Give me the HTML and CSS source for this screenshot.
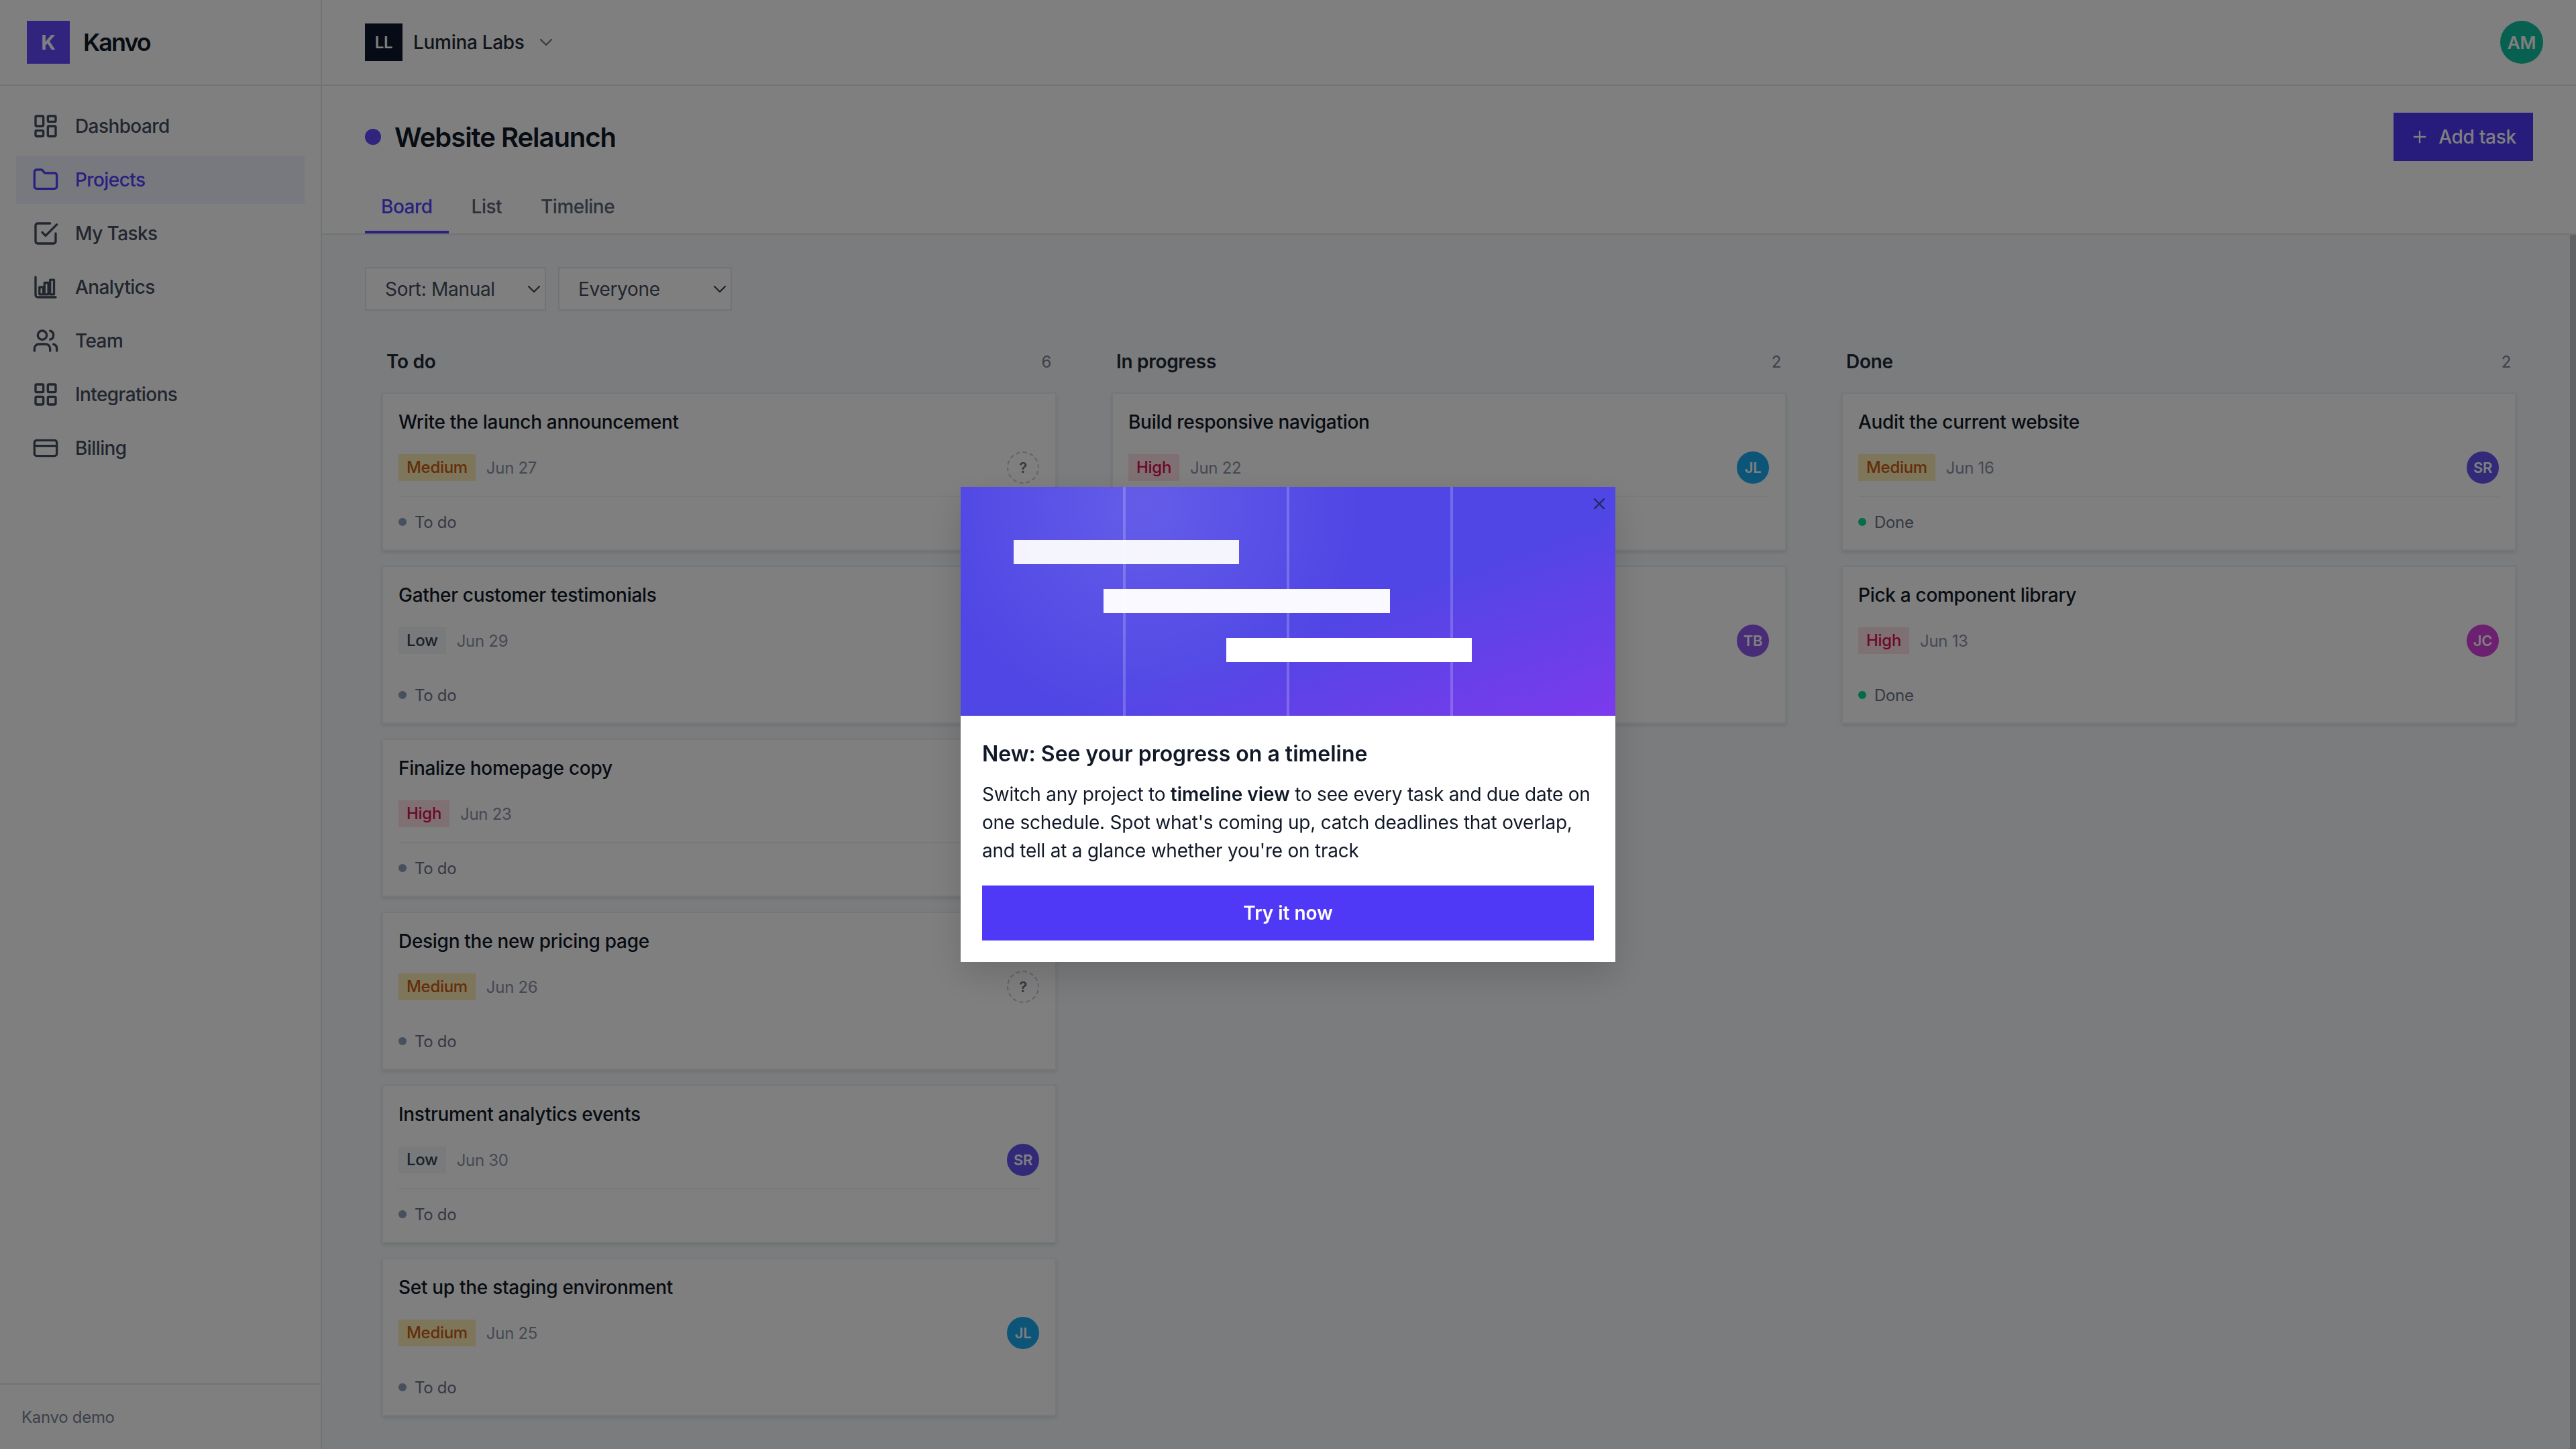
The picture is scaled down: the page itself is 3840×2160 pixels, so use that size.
FILE: index.html
```html
<!DOCTYPE html>
<html lang="en">
  <head>
    <meta charset="UTF-8" />
    <title>Kanvo - Website Relaunch</title>
    <link rel="stylesheet" href="styles.css">
  </head>
  <body>
    <div class="app">
      <aside class="sidebar">
        <div class="brand">
          <span class="brand-mark">K</span>
          <span class="brand-name">Kanvo</span>
        </div>
        <nav class="nav">
          <a class="nav-item">
            <svg class="icon" viewBox="0 0 24 24"><rect x="3" y="3" width="7" height="9" rx="1"/><rect x="14" y="3" width="7" height="5" rx="1"/><rect x="14" y="12" width="7" height="9" rx="1"/><rect x="3" y="16" width="7" height="5" rx="1"/></svg>
            Dashboard
          </a>
          <a class="nav-item active">
            <svg class="icon" viewBox="0 0 24 24"><path d="M20 20a2 2 0 0 0 2-2V8a2 2 0 0 0-2-2h-7.9a2 2 0 0 1-1.69-.9L9.6 3.9A2 2 0 0 0 7.93 3H4a2 2 0 0 0-2 2v13a2 2 0 0 0 2 2Z"/></svg>
            Projects
          </a>
          <a class="nav-item">
            <svg class="icon" viewBox="0 0 24 24"><path d="M9 11l3 3L22 4"/><path d="M21 12v7a2 2 0 0 1-2 2H5a2 2 0 0 1-2-2V5a2 2 0 0 1 2-2h11"/></svg>
            My Tasks
          </a>
          <a class="nav-item">
            <svg class="icon" viewBox="0 0 24 24"><path d="M3 3v16a2 2 0 0 0 2 2h16"/><rect x="6.5" y="12" width="3.5" height="6.5"/><rect x="11" y="8" width="3.5" height="10.5"/><rect x="16" y="5.5" width="3.5" height="13"/></svg>
            Analytics
          </a>
          <a class="nav-item">
            <svg class="icon" viewBox="0 0 24 24"><path d="M16 21v-2a4 4 0 0 0-4-4H6a4 4 0 0 0-4 4v2"/><circle cx="9" cy="7" r="4"/><path d="M22 21v-2a4 4 0 0 0-3-3.87"/><path d="M16 3.13a4 4 0 0 1 0 7.75"/></svg>
            Team
          </a>
          <a class="nav-item">
            <svg class="icon" viewBox="0 0 24 24"><rect x="3" y="3" width="7" height="7" rx="1"/><rect x="14" y="3" width="7" height="7" rx="1"/><rect x="14" y="14" width="7" height="7" rx="1"/><rect x="3" y="14" width="7" height="7" rx="1"/></svg>
            Integrations
          </a>
          <a class="nav-item">
            <svg class="icon" viewBox="0 0 24 24"><rect x="2" y="5" width="20" height="14" rx="2"/><path d="M2 10h20"/></svg>
            Billing
          </a>
        </nav>
        <div class="sidebar-foot">Kanvo demo</div>
      </aside>

      <main class="main">
        <header class="topbar">
          <div class="workspace">
            <span class="workspace-mark">LL</span>
            <span class="workspace-name">Lumina Labs</span>
            <svg class="chevron" viewBox="0 0 24 24"><path d="m6 9 6 6 6-6"/></svg>
          </div>
          <span class="avatar avatar-lg teal">AM</span>
        </header>

        <section class="page-head">
          <div class="title-row">
            <div class="title-wrap">
              <span class="title-dot"></span>
              <h1 class="title">Website Relaunch</h1>
            </div>
            <button class="add-btn">
              <svg class="add-icon" viewBox="0 0 24 24"><path d="M5 12h14"/><path d="M12 5v14"/></svg>
              Add task
            </button>
          </div>
          <div class="tabs">
            <a class="tab active">Board</a>
            <a class="tab">List</a>
            <a class="tab">Timeline</a>
          </div>
        </section>

        <section class="board">
          <div class="filters">
            <div class="select select-sort">Sort: Manual <svg class="select-arrow" viewBox="0 0 24 24"><path d="m6 9 6 6 6-6"/></svg></div>
            <div class="select select-people">Everyone <svg class="select-arrow" viewBox="0 0 24 24"><path d="m6 9 6 6 6-6"/></svg></div>
          </div>

          <div class="columns">
            <div class="column">
              <div class="column-head"><span class="column-name">To do</span><span class="column-count">6</span></div>
              <div class="card">
                <div class="card-title">Write the launch announcement</div>
                <div class="card-meta"><span class="pill medium">Medium</span><span class="date">Jun 27</span><span class="avatar none">?</span></div>
                <div class="card-status"><span class="dot"></span>To do</div>
              </div>
              <div class="card">
                <div class="card-title">Gather customer testimonials</div>
                <div class="card-meta"><span class="pill low">Low</span><span class="date">Jun 29</span><span class="avatar teal">AM</span></div>
                <div class="card-status"><span class="dot"></span>To do</div>
              </div>
              <div class="card">
                <div class="card-title">Finalize homepage copy</div>
                <div class="card-meta"><span class="pill high">High</span><span class="date">Jun 23</span><span class="avatar indigo">SR</span></div>
                <div class="card-status"><span class="dot"></span>To do</div>
              </div>
              <div class="card">
                <div class="card-title">Design the new pricing page</div>
                <div class="card-meta"><span class="pill medium">Medium</span><span class="date">Jun 26</span><span class="avatar none">?</span></div>
                <div class="card-status"><span class="dot"></span>To do</div>
              </div>
              <div class="card">
                <div class="card-title">Instrument analytics events</div>
                <div class="card-meta"><span class="pill low">Low</span><span class="date">Jun 30</span><span class="avatar indigo">SR</span></div>
                <div class="card-status"><span class="dot"></span>To do</div>
              </div>
              <div class="card">
                <div class="card-title">Set up the staging environment</div>
                <div class="card-meta"><span class="pill medium">Medium</span><span class="date">Jun 25</span><span class="avatar blue">JL</span></div>
                <div class="card-status"><span class="dot"></span>To do</div>
              </div>
            </div>

            <div class="column">
              <div class="column-head"><span class="column-name">In progress</span><span class="column-count">2</span></div>
              <div class="card">
                <div class="card-title">Build responsive navigation</div>
                <div class="card-meta"><span class="pill high">High</span><span class="date">Jun 22</span><span class="avatar blue">JL</span></div>
                <div class="card-status"><span class="dot progress"></span>In progress</div>
              </div>
              <div class="card">
                <div class="card-title">Refresh the brand palette</div>
                <div class="card-meta"><span class="pill medium">Medium</span><span class="date">Jun 24</span><span class="avatar violet">TB</span></div>
                <div class="card-status"><span class="dot progress"></span>In progress</div>
              </div>
            </div>

            <div class="column">
              <div class="column-head"><span class="column-name">Done</span><span class="column-count">2</span></div>
              <div class="card">
                <div class="card-title">Audit the current website</div>
                <div class="card-meta"><span class="pill medium">Medium</span><span class="date">Jun 16</span><span class="avatar indigo">SR</span></div>
                <div class="card-status"><span class="dot done"></span>Done</div>
              </div>
              <div class="card">
                <div class="card-title">Pick a component library</div>
                <div class="card-meta"><span class="pill high">High</span><span class="date">Jun 13</span><span class="avatar magenta">JC</span></div>
                <div class="card-status"><span class="dot done"></span>Done</div>
              </div>
            </div>
          </div>
          <div class="scrollbar"></div>
        </section>
      </main>
    </div>

    <div class="overlay">
      <div class="modal">
        <div class="hero">
          <span class="hero-bar bar-one"></span>
          <span class="hero-bar bar-two"></span>
          <span class="hero-bar bar-three"></span>
          <svg class="modal-close" viewBox="0 0 24 24"><path d="M18 6 6 18"/><path d="m6 6 12 12"/></svg>
        </div>
        <div class="modal-body">
          <h2 class="modal-title">New: See your progress on a timeline</h2>
          <p class="modal-text">Switch any project to <strong>timeline view</strong> to see every task and due date on one schedule. Spot what's coming up, catch deadlines that overlap, and tell at a glance whether you're on track</p>
          <button class="modal-btn">Try it now</button>
        </div>
      </div>
    </div>
  </body>
</html>
```
FILE: styles.css
```css
* {
  box-sizing: border-box;
}

html,
body {
  margin: 0;
  height: 100%;
  overflow: hidden;
}

body {
  font-family: Inter, "Liberation Sans", sans-serif;
  font-size: 28px;
  letter-spacing: -0.3px;
  color: #111827;
  background-color: #fff;
}

.app {
  display: flex;
  height: 100vh;
}

/* Sidebar */
.sidebar {
  display: flex;
  flex-direction: column;
  flex: 0 0 480px;
  border-right: 2px solid #e5e7eb;
  background-color: #fff;
}

.brand {
  display: flex;
  align-items: center;
  gap: 20px;
  flex: 0 0 128px;
  padding-left: 40px;
  border-bottom: 2px solid #e5e7eb;
}

.brand-mark {
  display: flex;
  justify-content: center;
  align-items: center;
  width: 64px;
  height: 64px;
  background-color: #6048ff;
  color: #fff;
  font-size: 30px;
  font-weight: 700;
}

.brand-name {
  font-size: 36px;
  font-weight: 600;
  letter-spacing: -2px;
}

.nav {
  display: flex;
  flex-direction: column;
  gap: 8px;
  flex: 1;
  padding: 24px;
}

.nav-item {
  display: flex;
  align-items: center;
  gap: 24px;
  height: 72px;
  padding-left: 24px;
  color: #444c5e;
  font-weight: 500;
  letter-spacing: -0.6px;
}

.nav-item.active {
  background-color: #eef2ff;
  color: #5540ff;
}

.icon {
  flex: none;
  width: 40px;
  height: 40px;
  fill: none;
  stroke: currentColor;
  stroke-width: 2;
  stroke-linecap: round;
  stroke-linejoin: round;
}

.sidebar-foot {
  display: flex;
  align-items: center;
  height: 98px;
  padding-left: 32px;
  border-top: 2px solid #e5e7eb;
  color: #7a8296;
  font-size: 24px;
}

/* Main */
.main {
  display: flex;
  flex-direction: column;
  flex: 1;
  min-width: 0;
}

.topbar {
  display: flex;
  justify-content: space-between;
  align-items: center;
  flex: 0 0 128px;
  padding: 0 49px 0 64px;
  border-bottom: 2px solid #e5e7eb;
}

.workspace {
  display: flex;
  align-items: center;
}

.workspace-mark {
  display: flex;
  justify-content: center;
  align-items: center;
  width: 56px;
  height: 56px;
  margin-right: 16px;
  background-color: #0f172a;
  color: #fff;
  font-size: 24px;
  font-weight: 600;
}

.workspace-name {
  font-weight: 500;
  color: #1f2937;
}

.chevron {
  width: 32px;
  height: 32px;
  margin-left: 16px;
  fill: none;
  stroke: #6b7280;
  stroke-width: 1.6;
  stroke-linecap: round;
  stroke-linejoin: round;
}

.page-head {
  flex: 0 0 222px;
  padding: 40px 64px 0;
  border-bottom: 2px solid #e5e7eb;
}

.title-row {
  display: flex;
  justify-content: space-between;
  align-items: center;
  height: 72px;
}

.title-wrap {
  display: flex;
  align-items: center;
  gap: 20px;
}

.title-dot {
  width: 24px;
  height: 24px;
  border-radius: 50%;
  background-color: #6048ff;
}

.title {
  margin: 0;
  font-size: 40px;
  font-weight: 600;
  letter-spacing: -1.05px;
}

.add-btn {
  display: flex;
  justify-content: center;
  align-items: center;
  gap: 14px;
  width: 208px;
  height: 72px;
  border: 0;
  background-color: #4f39f6;
  color: #fff;
  font-family: inherit;
  font-size: 28px;
  font-weight: 500;
  letter-spacing: -0.3px;
}

.add-icon {
  width: 28px;
  height: 28px;
  fill: none;
  stroke: currentColor;
  stroke-width: 2;
  stroke-linecap: round;
}

.tabs {
  display: flex;
  gap: 10px;
  margin-top: 28px;
}

.tab {
  display: flex;
  align-items: center;
  height: 80px;
  padding: 3px 24px 0;
  border-bottom: 4px solid transparent;
  color: #5a6274;
  font-weight: 500;
  letter-spacing: -0.5px;
}

.tab.active {
  border-bottom-color: #5540ff;
  color: #5540ff;
}

/* Board */
.board {
  position: relative;
  flex: 1;
  min-height: 0;
  padding: 48px 64px 0;
  overflow: hidden;
  background-color: #f6f9fc;
}

.scrollbar {
  position: absolute;
  top: 0;
  right: 0;
  bottom: 0;
  width: 9px;
  background-color: #c4c6c9;
}

.filters {
  display: flex;
  gap: 18px;
}

.select {
  display: flex;
  justify-content: space-between;
  align-items: center;
  height: 65px;
  padding: 0 0 0 28px;
  border: 2px solid #e5e7eb;
  background-color: #fff;
  color: #444c5e;
}

.select-sort {
  width: 270px;
}

.select-people {
  width: 259px;
}

.select-arrow {
  width: 32px;
  height: 32px;
  fill: none;
  stroke: #374151;
  stroke-width: 1.6;
  stroke-linecap: round;
  stroke-linejoin: round;
}

.columns {
  display: flex;
  gap: 32px;
  margin-top: 48px;
}

.column {
  display: flex;
  flex-direction: column;
  gap: 22px;
  flex: 1;
  min-width: 0;
  padding: 0 25px;
}

.column-head {
  display: flex;
  justify-content: space-between;
  align-items: center;
  height: 56px;
  margin-bottom: -4px;
  padding: 0 8px 0 7px;
}

.column-name {
  font-weight: 600;
  color: #1f2937;
}

.column-count {
  color: #7a8296;
  font-size: 24px;
}

.card {
  height: 236px;
  padding: 22px 24px 0 23px;
  border: 2px solid #eceef1;
  background-color: #fff;
  box-shadow: 0 3px 6px rgba(0, 0, 0, 0.1);
}

.card-title {
  height: 40px;
  line-height: 40px;
  font-weight: 500;
}

.card-meta {
  display: flex;
  align-items: center;
  gap: 16px;
  height: 48px;
  margin-top: 24px;
}

.pill {
  height: 40px;
  padding: 0 12px;
  font-size: 24px;
  font-weight: 500;
  line-height: 40px;
}

.pill.medium {
  background-color: #fcecb4;
  color: #c85a10;
}

.pill.low {
  background-color: #f1f5f9;
  color: #374151;
}

.pill.high {
  background-color: #ffe0e8;
  color: #d81050;
}

.date {
  flex: 1;
  color: #8a90a8;
  font-size: 24px;
}

.avatar {
  display: flex;
  justify-content: center;
  align-items: center;
  flex: none;
  width: 48px;
  height: 48px;
  border-radius: 50%;
  color: #fff;
  font-size: 22px;
  font-weight: 600;
}

.avatar-lg {
  width: 64px;
  height: 64px;
  font-size: 26px;
}

.avatar.none {
  border: 2px dashed #c5c9d0;
  color: #6b7280;
}

.teal {
  background-color: #10c0a0;
}

.indigo {
  background-color: #6454f0;
}

.blue {
  background-color: #18a8f0;
}

.violet {
  background-color: #9058f0;
}

.magenta {
  background-color: #d840e0;
}

.card-status {
  display: flex;
  align-items: center;
  gap: 12px;
  height: 76px;
  margin-top: 18px;
  border-top: 2px solid #f1f3f5;
  color: #6b7288;
  font-size: 24px;
}

.card:nth-child(odd) .card-status {
  border-top-color: transparent;
}

.dot {
  width: 12px;
  height: 12px;
  border-radius: 50%;
  background-color: #8ca0bc;
}

.dot.progress {
  background-color: #6048ff;
}

.dot.done {
  background-color: #0cd498;
}

/* Modal */
.overlay {
  position: fixed;
  inset: 0;
  display: flex;
  justify-content: center;
  align-items: center;
  background-color: rgba(0, 0, 0, 0.5);
}

.modal {
  width: 976px;
  background-color: #fff;
  box-shadow: 0 20px 50px rgba(0, 0, 0, 0.15);
}

.hero {
  position: relative;
  display: flex;
  flex-direction: column;
  gap: 37px;
  height: 341px;
  padding-top: 79px;
  background-color: #4f46e5;
  background-image:
    linear-gradient(rgba(255, 255, 255, 0.2), rgba(255, 255, 255, 0.2)),
    linear-gradient(rgba(255, 255, 255, 0.2), rgba(255, 255, 255, 0.2)),
    linear-gradient(rgba(255, 255, 255, 0.2), rgba(255, 255, 255, 0.2)),
    radial-gradient(circle at 28% 8%, rgba(255, 255, 255, 0.12), rgba(255, 255, 255, 0) 42%),
    linear-gradient(160deg, #4f46e5 55%, #7c3aed 100%);
  background-repeat: no-repeat;
  background-position: 242px 0, 486px 0, 730px 0, 0 0, 0 0;
  background-size: 4px 100%, 4px 100%, 4px 100%, 100% 100%, 100% 100%;
}

.hero-bar {
  height: 36px;
  background-color: #fff;
}

.bar-one {
  width: 336px;
  margin-left: 79px;
  opacity: 0.94;
}

.bar-two {
  width: 427px;
  margin-left: 213px;
  opacity: 0.97;
}

.bar-three {
  width: 366px;
  margin-left: 396px;
}

.modal-close {
  position: absolute;
  top: 11px;
  right: 10px;
  width: 28px;
  height: 28px;
  fill: none;
  stroke: #1f2a5c;
  stroke-width: 2;
  stroke-linecap: round;
}

.modal-body {
  padding: 37px 32px 32px;
}

.modal-title {
  margin: 0;
  font-size: 32px;
  font-weight: 600;
  line-height: 40px;
  letter-spacing: 0;
}

.modal-text {
  margin: 19px 0 31px;
  color: #111827;
  line-height: 42px;
  letter-spacing: -0.24px;
}

.modal-text strong {
  font-weight: 600;
  letter-spacing: 0;
}

.modal-btn {
  display: block;
  width: 100%;
  height: 82px;
  border: 0;
  background-color: #4f39f6;
  color: #fff;
  font-family: inherit;
  font-size: 28px;
  font-weight: 600;
}
```
